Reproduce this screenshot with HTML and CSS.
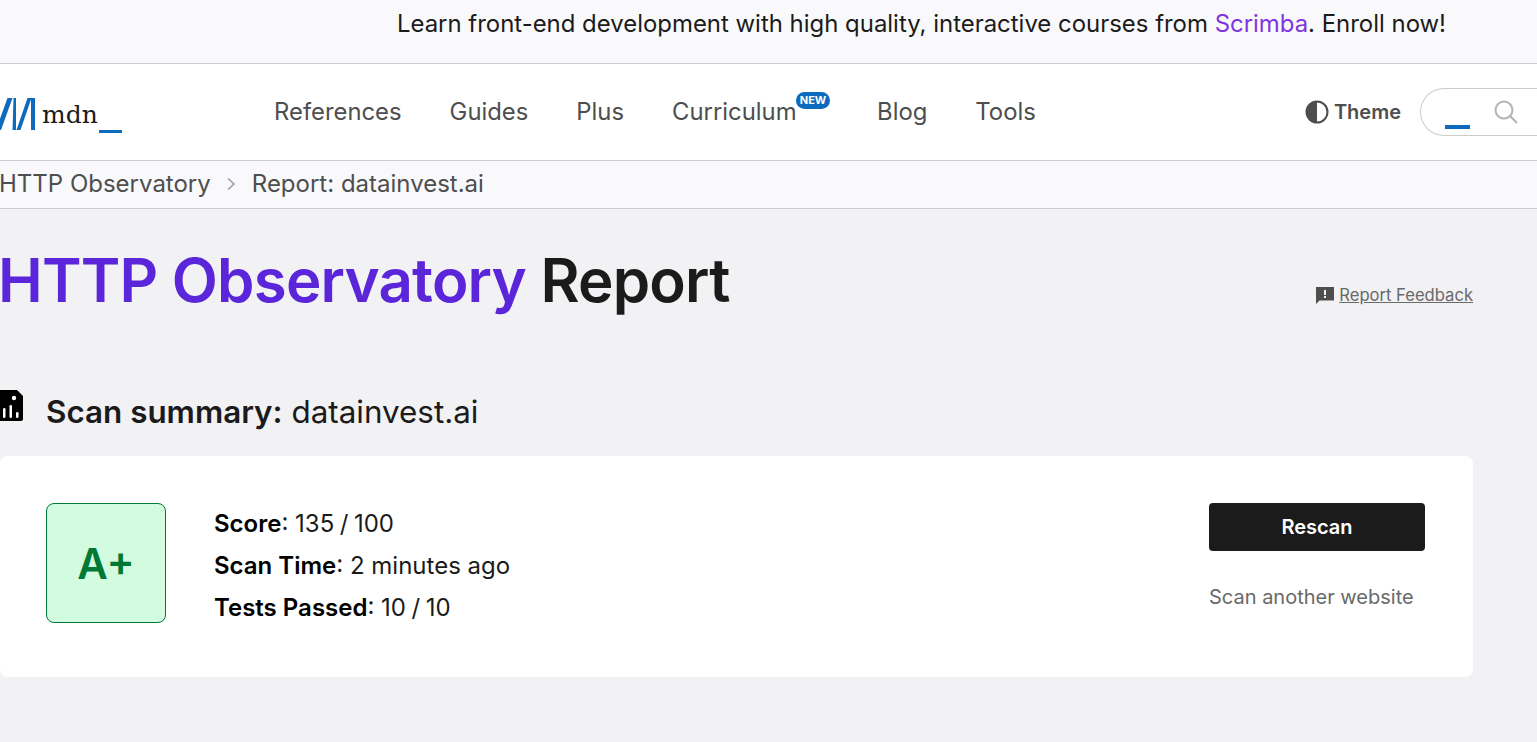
FILE: index.html
```html
<!DOCTYPE html>
<html lang="en">
<head>
    <meta charset="UTF-8">
    <title>HTTP Observatory Report</title>
    <link rel="stylesheet" href="styles.css">
</head>
<body>
    <div class="banner">
        <p>Learn front-end development with high quality, interactive courses from <a href="#">Scrimba</a>. Enroll now!</p>
    </div>
    <header class="nav">
        <a class="logo" href="#" aria-label="MDN">
            <svg width="35" height="32" viewBox="0 0 35 32">
                <path d="M-4 32 L7.5 0 H12.5 L1 32 Z M16.5 32 L27.5 0 H31.5 L20.5 32 Z" fill="#0c6bbd"/>
                <path d="M13.5 0 H16 L16 32 H12.5 Z" fill="#0c6bbd"/>
                <rect x="31" y="0" width="4" height="32" fill="#0c6bbd"/>
            </svg>
            <span class="logo-text">mdn</span>
            <span class="logo-bar"></span>
        </a>
        <nav class="menu">
            <a href="#">References</a>
            <a href="#">Guides</a>
            <a href="#">Plus</a>
            <a href="#" class="has-badge">Curriculum<span class="badge">NEW</span></a>
            <a href="#">Blog</a>
            <a href="#">Tools</a>
        </nav>
        <div class="theme">
            <svg width="24" height="24" viewBox="0 0 24 24">
                <circle cx="12" cy="12" r="10.5" fill="#fff" stroke="#4e4e4e" stroke-width="2"/>
                <path d="M12 1.5 A10.5 10.5 0 0 0 12 22.5 Z" fill="#4e4e4e"/>
            </svg>
            <span>Theme</span>
        </div>
        <div class="search">
            <span class="search-bar"></span>
            <svg width="26" height="26" viewBox="0 0 26 26" fill="none" stroke="#b3b3b3" stroke-width="2">
                <circle cx="11" cy="11" r="8.5"/>
                <path d="M17 17 L24 24"/>
            </svg>
        </div>
    </header>
    <div class="crumbs">
        <a href="#">HTTP Observatory</a>
        <svg width="10" height="14" viewBox="0 0 10 14" fill="none" stroke="#9e9e9e" stroke-width="1.6">
            <path d="M2 1.5 L8 7 L2 12.5"/>
        </svg>
        <a href="#">Report: datainvest.ai</a>
    </div>
    <main class="main">
        <div class="title-row">
            <h1><span class="accent">HTTP Observatory</span> Report</h1>
            <a class="feedback" href="#">
                <svg width="18" height="18" viewBox="0 0 18 18">
                    <path d="M0 1 H18 V14.5 H3.5 L0 18 Z" fill="#4e4e4e"/>
                    <rect x="8" y="4" width="2" height="5" fill="#f2f1f4"/>
                    <rect x="8" y="10" width="2" height="2" fill="#f2f1f4"/>
                </svg>
                <span>Report Feedback</span>
            </a>
        </div>
        <h2 class="summary-title">
            <svg width="24" height="32" viewBox="0 0 24 32">
                <path d="M-2 1 H17 L23 7 V30 A2 2 0 0 1 21 32 H-2 Z" fill="#000"/>
                <rect x="3" y="19" width="2.5" height="10" rx="1.25" fill="#fff"/>
                <rect x="9.5" y="16" width="2.5" height="13" rx="1.25" fill="#fff"/>
                <rect x="16" y="23" width="2.5" height="6" rx="1.25" fill="#fff"/>
                <circle cx="14" cy="9" r="2.2" fill="#fff"/>
            </svg>
            <span><b>Scan summary:</b> datainvest.ai</span>
        </h2>
        <section class="card">
            <div class="grade">A+</div>
            <ul class="stats">
                <li><b>Score</b>: 135<span class="sep">/</span>100</li>
                <li><b>Scan Time</b>: 2 minutes ago</li>
                <li><b>Tests Passed</b>: 10<span class="sep">/</span>10</li>
            </ul>
            <div class="actions">
                <button class="rescan">Rescan</button>
                <a class="another" href="#">Scan another website</a>
            </div>
        </section>
    </main>
</body>
</html>
```

FILE: styles.css
```css
html {
    overflow: hidden;
}
body {
    font-family: Inter, "Liberation Sans", sans-serif;
    background-color: #f2f1f4;
    color: #1b1b1b;
    margin: 0;
    height: 742px;
    overflow: hidden;
}
a {
    color: inherit;
    text-decoration: none;
}
.banner {
    height: 63px;
    background-color: #f9f9fb;
    border-bottom: 1px solid #cdcdcd;
    display: flex;
    align-items: center;
    justify-content: flex-end;
    padding-right: 91px;
}
.banner p {
    margin: 0 0 16px;
    font-size: 23.93px;
    line-height: 48px;
    white-space: nowrap;
    color: #1b1b1b;
}
.banner a {
    color: #8035e0;
}
.nav {
    height: 96px;
    background-color: #fff;
    border-bottom: 1px solid #cdcdcd;
    display: flex;
    align-items: center;
}
.logo {
    width: 274px;
    flex-shrink: 0;
    display: flex;
    align-items: flex-end;
    height: 32px;
    margin-top: 4px;
}
.logo svg {
    display: block;
}
.logo-text {
    font-family: "DejaVu Serif", serif;
    font-size: 25px;
    line-height: 28px;
    color: #1b1b1b;
    margin-left: 7px;
    margin-bottom: 1px;
}
.logo-bar {
    width: 23px;
    height: 3px;
    background-color: #0c6bbd;
    margin-left: 1px;
    margin-bottom: -3px;
}
.menu {
    display: flex;
    gap: 48px;
    font-size: 23.85px;
    color: #4e4e4e;
    margin-bottom: 2px;
}
.has-badge {
    position: relative;
    padding-right: 32.5px;
}
.badge {
    position: absolute;
    right: -1px;
    top: -5px;
    width: 34px;
    height: 17px;
    border-radius: 9px;
    background-color: #0c6bbd;
    color: #fff;
    font-size: 11px;
    font-weight: 700;
    line-height: 17px;
    text-align: center;
}
.theme {
    margin-left: auto;
    display: flex;
    align-items: center;
    gap: 5px;
    font-size: 20px;
    font-weight: 600;
    color: #4e4e4e;
}
.search {
    margin-left: 19px;
    margin-right: -2px;
    width: 118px;
    height: 46px;
    border: 1px solid #cdcdcd;
    border-radius: 24px 0 0 24px;
    border-right: 0;
    display: flex;
    align-items: center;
    position: relative;
}
.search-bar {
    width: 25px;
    height: 4px;
    background-color: #0c6bbd;
    margin: 30px 0 0 24px;
}
.search svg {
    margin-left: 23px;
}
.crumbs {
    height: 48px;
    box-sizing: border-box;
    background-color: #f9f9fb;
    border-bottom: 1px solid #cdcdcd;
    display: flex;
    align-items: center;
    gap: 15.5px;
    font-size: 24px;
    color: #4e4e4e;
    margin-left: -1px;
    padding-bottom: 2px;
}
.main {
    width: 1473px;
}
.title-row {
    display: flex;
    align-items: flex-end;
    justify-content: space-between;
    height: 107px;
}
h1 {
    margin: 0 0 0 -2px;
    font-size: 60px;
    font-weight: 600;
    line-height: 72px;
    letter-spacing: -0.8px;
    white-space: nowrap;
    color: #1b1b1b;
}
.accent {
    color: #5b25d9;
}
.feedback {
    display: flex;
    align-items: center;
    gap: 5.5px;
    font-size: 16.6px;
    color: #696969;
    margin-bottom: 11px;
}
.feedback span {
    text-decoration: underline;
}
.summary-title {
    margin: 79px 0 0;
    height: 34px;
    display: flex;
    align-items: center;
    gap: 22px;
    font-size: 31.4px;
    font-weight: 400;
    line-height: 34px;
    color: #1b1b1b;
}
.summary-title svg {
    margin-bottom: 14px;
    flex-shrink: 0;
}
.summary-title b {
    font-weight: 600;
}
.card {
    margin-top: 27px;
    height: 221px;
    background-color: #fff;
    border-radius: 8px;
    display: flex;
    align-items: flex-start;
    box-sizing: border-box;
    padding: 47px 48px 0 46px;
}
.grade {
    width: 120px;
    height: 120px;
    box-sizing: border-box;
    border: 1px solid #007936;
    border-radius: 8px;
    background-color: #d3fbdf;
    color: #007936;
    font-size: 42px;
    font-weight: 600;
    display: flex;
    align-items: center;
    justify-content: center;
}
.stats {
    list-style: none;
    margin: 0 0 0 48px;
    padding: 0;
    font-size: 24px;
    line-height: 42px;
    color: #1b1b1b;
}
.stats b {
    font-weight: 600;
    color: #000;
}
.sep {
    margin: 0 5.5px;
}
.actions {
    margin-left: auto;
    width: 216px;
}
.rescan {
    display: block;
    width: 100%;
    height: 48px;
    border: 0;
    border-radius: 4px;
    background-color: #1b1b1b;
    color: #fff;
    font-family: inherit;
    font-size: 20px;
    font-weight: 600;
}
.another {
    display: block;
    margin-top: 31px;
    font-size: 20px;
    line-height: 30px;
    color: #696969;
}
```
